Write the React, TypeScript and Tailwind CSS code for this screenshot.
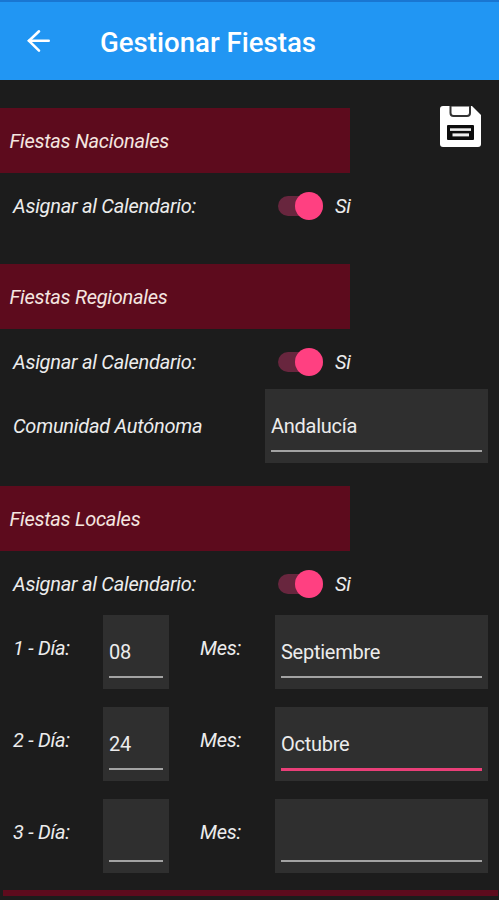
import React from "react";

const SectionTitle = ({ title }: { title: string }) => {
    return (
        <h2 className="flex h-[65px] w-[350px] items-center bg-[#5d0b1d] pl-[9.5px] text-[#f5e6e0] italic">
            {title}
        </h2>
    );
};

const AssignRow = () => {
    return (
        <div className="flex h-[60px] items-center pt-[5px] pl-[13px] italic">
            <span className="w-[265px] pt-px">Asignar al Calendario:</span>
            <button type="button" role="switch" aria-checked="true" aria-label="Asignar al Calendario" className="flex h-5 w-[45px] items-center justify-end rounded-full bg-[#68263e]">
                <span className="h-7 w-7 shrink-0 rounded-full bg-[#ff4081]" />
            </button>
            <span className="pt-px pl-[12px]">Si</span>
        </div>
    );
};

type FieldProps = {
    value: string;
    className: string;
    focused?: boolean;
};

const Field = ({ value, className, focused }: FieldProps) => {
    return (
        <div className={`flex h-[74px] shrink-0 flex-col bg-[#2f2f2f] px-[6px] ${className}`}>
            <span className="flex h-[61px] items-end pb-[11px] leading-[26px]">{value}</span>
            <span className={focused ? "h-[3px] bg-[#e93f78]" : "h-[2px] bg-[#a3a3a3]"} />
        </div>
    );
};

const holidays = [
    { id: 1, day: "08", month: "Septiembre" },
    { id: 2, day: "24", month: "Octubre", focused: true },
    { id: 3, day: "", month: "" },
];

const SaveIcon = () => {
    return (
        <svg width="42" height="42" viewBox="0 0 42 42" fill="none">
            <path d="M3 0H32L41 9V38Q41 41 38 41H3Q0 41 0 38V3Q0 0 3 0Z" fill="#fff" />
            <path d="M10.5 0V7Q10.5 10 13.5 10H27Q30 10 30 7V0" stroke="#333" strokeWidth="2" />
            <path d="M10.5 0H30" stroke="#444" strokeWidth="1.2" />
            <rect x="7" y="19" width="27" height="15" rx="1" fill="#0c0c0c" />
            <rect x="10" y="22.3" width="21" height="2.6" fill="#eee" />
            <rect x="12.5" y="27.4" width="16.5" height="3" fill="#eee" />
        </svg>
    );
};

const App = () => {
    return (
        <div className="flex h-[900px] w-[499px] flex-col overflow-hidden bg-[#1c1c1c] font-['Roboto',sans-serif] text-[20px] tracking-[-0.26px] text-[#ececec]">
            <header className="flex h-[80px] shrink-0 items-center border-t-2 border-[#1976d2] bg-[#2196f3] pl-[27px] text-white">
                <svg width="24" height="24" viewBox="0 0 24 24" fill="none" stroke="currentColor" strokeWidth="2.6" strokeLinecap="round">
                    <path d="M21.7 11.8H2" />
                    <path d="M12 2.3L2 11.8L12 21.7" />
                </svg>
                <h1 className="pt-[3px] pl-[49px] text-[27.6px] font-medium tracking-normal">Gestionar Fiestas</h1>
            </header>

            <main className="flex flex-col pt-7">
                <section className="flex h-[156px] justify-between pr-[17px]">
                    <div>
                        <SectionTitle title="Fiestas Nacionales" />
                        <AssignRow />
                    </div>
                    <button type="button" aria-label="Guardar" className="-mt-[2px] self-start">
                        <SaveIcon />
                    </button>
                </section>

                <section className="h-[222px]">
                    <SectionTitle title="Fiestas Regionales" />
                    <AssignRow />
                    <div className="flex items-center pl-[13px]">
                        <span className="w-[252px] italic">Comunidad Autónoma</span>
                        <Field value="Andalucía" className="w-[223px]" />
                    </div>
                </section>

                <section>
                    <SectionTitle title="Fiestas Locales" />
                    <AssignRow />
                    <div className="flex flex-col gap-[18px] pt-[4px] pl-[13px]">
                        {holidays.map((h) => (
                            <div key={h.id} className="flex">
                                <span className="w-[90px] pt-[18px] italic">{h.id} - Día:</span>
                                <Field value={h.day} className="w-[66px]" />
                                <span className="w-[106px] pt-[18px] pl-[31px] italic">Mes:</span>
                                <Field value={h.month} className="w-[213px]" focused={h.focused} />
                            </div>
                        ))}
                    </div>
                </section>

                <div className="mt-[17px] mr-px ml-[3px] h-[6px] bg-[#5d0b1d]" />
            </main>
        </div>
    );
};

export default App;
